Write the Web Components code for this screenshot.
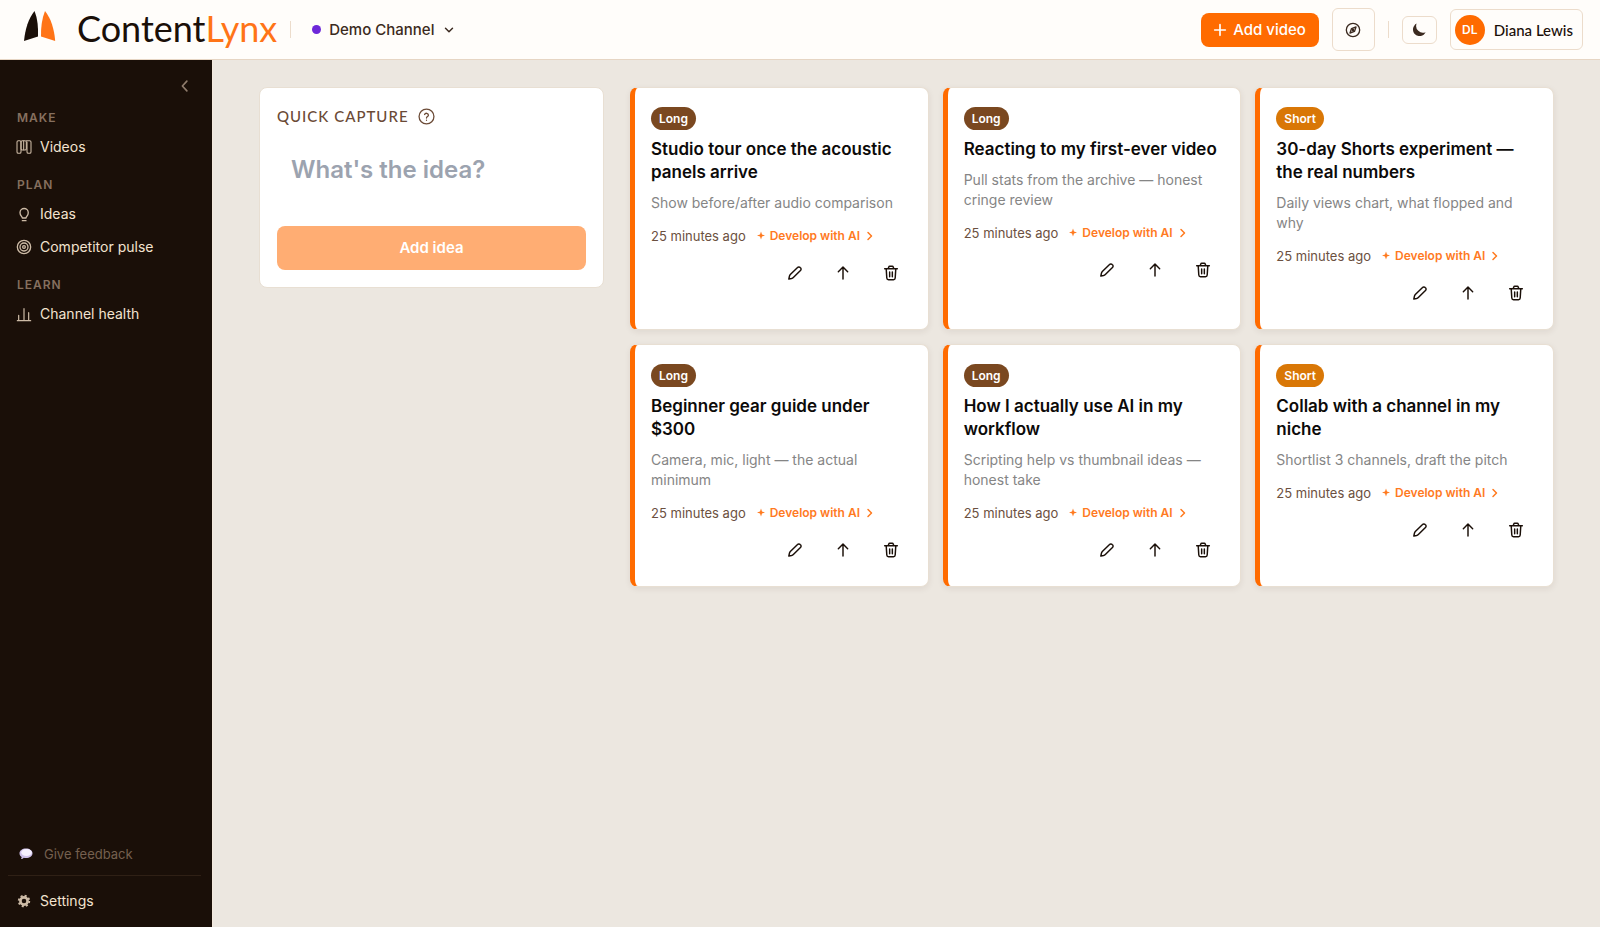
<!DOCTYPE html>
<html lang="en">
<head>
<meta charset="utf-8">
<meta name="viewport" content="width=device-width, initial-scale=1">
<title>ContentLynx</title>
<style>
  html, body {
    height: 100%;
    margin: 0;
  }

  body {
    font: 14px/20px Inter, sans-serif;
    color: #1a0f08;
    background: #ece7e0;
  }
</style>
</head>
<body>
<app-shell>
  <app-header slot="header" channel="Demo Channel" user="Diana Lewis" initials="DL"></app-header>

  <app-sidebar slot="sidebar">
    <nav-group label="Make">
      <nav-item icon="board">Videos</nav-item>
    </nav-group>
    <nav-group label="Plan">
      <nav-item icon="bulb">Ideas</nav-item>
      <nav-item icon="target">Competitor pulse</nav-item>
    </nav-group>
    <nav-group label="Learn">
      <nav-item icon="chart">Channel health</nav-item>
    </nav-group>
    <nav-item slot="footer" icon="speech" muted>Give feedback</nav-item>
    <nav-item slot="footer" icon="gear">Settings</nav-item>
  </app-sidebar>

  <quick-capture></quick-capture>
  <idea-grid>
    <idea-card kind="Long" age="25 minutes ago">
      <span slot="title">Studio tour once the acoustic panels arrive</span>
      <span slot="note">Show before/after audio comparison</span>
    </idea-card>
    <idea-card kind="Long" age="25 minutes ago">
      <span slot="title">Reacting to my first-ever video</span>
      <span slot="note">Pull stats from the archive — honest cringe review</span>
    </idea-card>
    <idea-card kind="Short" age="25 minutes ago">
      <span slot="title">30-day Shorts experiment — the real numbers</span>
      <span slot="note">Daily views chart, what flopped and why</span>
    </idea-card>
    <idea-card kind="Long" age="25 minutes ago">
      <span slot="title">Beginner gear guide under $300</span>
      <span slot="note">Camera, mic, light — the actual minimum</span>
    </idea-card>
    <idea-card kind="Long" age="25 minutes ago">
      <span slot="title">How I actually use AI in my workflow</span>
      <span slot="note">Scripting help vs thumbnail ideas — honest take</span>
    </idea-card>
    <idea-card kind="Short" age="25 minutes ago">
      <span slot="title">Collab with a channel in my niche</span>
      <span slot="note">Shortlist 3 channels, draft the pitch</span>
    </idea-card>
  </idea-grid>
</app-shell>

<script>
const BASE = `
  *, *::after, *::before {
    box-sizing: border-box;
  }

  :host {
    box-sizing: border-box;
  }

  button, input {
    font: inherit;
    color: inherit;
    padding: 0;
    border: none;
    margin: 0;
    background: none;
  }

  button {
    cursor: pointer;
  }

  svg {
    display: block;
    flex: none;
  }
`;

const line = (size, body, width = 2) => `
  <svg width="${size}" height="${size}" viewBox="0 0 24 24" fill="none" stroke="currentColor"
    stroke-width="${width}" stroke-linecap="round" stroke-linejoin="round" aria-hidden="true">${body}</svg>`;

const ICONS = {
  board: line(16, '<rect x="1.500" y="2.500" width="6" height="19" rx="2"/><rect x="7.500" y="2.500" width="8" height="14" rx="2"/><path d="M11.500 3v13"/><path d="M15.500 2.500h5a2 2 0 0 1 2 2v15a2 2 0 0 1-2 2h-2a2 2 0 0 1-2-2v-15"/>', 1.6),
  bulb: line(16, '<path d="M9.500 18c0-2-3.500-3.500-3.500-8a6.200 6.200 0 0 1 12.400 0c0 4.500-3.400 6-3.400 8zM9.500 22h5.500"/>', 2),
  target: line(16, '<circle cx="12" cy="12" r="10"/><circle cx="12" cy="12" r="6"/><circle cx="12" cy="12" r="2"/>', 2),
  chart: line(16, '<path d="M2 22h20M4 21v-7M12 21V4M19 21V10"/>', 1.8),
  speech: `
    <svg width="16" height="16" viewBox="0 0 16 16" aria-hidden="true">
      <path d="M8 2.500c3.700 0 6.500 2.100 6.500 4.800S11.700 12.100 8 12.100c-.8 0-1.500-.1-2.200-.3-.7.700-1.700 1.300-2.800 1.300.5-.6.700-1.300.6-2C2.300 10.200 1.500 8.900 1.500 7.300c0-2.700 2.800-4.800 6.500-4.800z" fill="#cfc0ea"/>
      <ellipse cx="8.500" cy="6.500" rx="5.300" ry="3.500" fill="#f6f0ff"/>
    </svg>`,
  gear: `
    <svg width="16" height="16" viewBox="0 0 16 16" aria-hidden="true">
      <circle cx="8" cy="8" r="3.600" fill="none" stroke="currentColor" stroke-width="2.600"/>
      <circle cx="8" cy="8" r="5.200" fill="none" stroke="currentColor" stroke-width="2" stroke-dasharray="2.040 2.040"/>
    </svg>`,
  chevronLeft: line(18, '<path d="M14.500 18.500l-6-6.500 6-6.500"/>', 2.2),
  chevronDown: line(14, '<path d="M6 9l6 6 6-6"/>', 2.5),
  chevronRight: line(12, '<path d="M8 19l7-7-7-7"/>', 3),
  plus: line(16, '<path d="M12 4v16M4 12h16"/>', 2.500),
  compass: line(16, '<circle cx="12" cy="12" r="10"/><path d="M16.500 7.500l-2.300 6.700-6.700 2.300 2.300-6.700z"/><circle cx="12" cy="12" r="1"/>', 2),
  moon: `
    <svg width="16" height="16" viewBox="0 0 16 16" aria-hidden="true">
      <path d="M5.600 1.600a6.600 6.600 0 1 0 9 8.600A6.800 6.800 0 0 1 5.600 1.600z" fill="currentColor"/>
    </svg>`,
  help: `
    <svg width="17" height="17" viewBox="0 0 24 24" fill="none" stroke="currentColor"
      stroke-width="1.800" stroke-linecap="round" stroke-linejoin="round" aria-hidden="true">
      <circle cx="12" cy="12" r="10.500"/><path d="M9.300 9.200a2.800 2.800 0 0 1 5.400.9c0 1.800-2.700 2.300-2.700 4M12 17.300v.1"/>
    </svg>`,
  spark: `
    <svg width="10" height="10" viewBox="0 0 10 10" aria-hidden="true">
      <path d="M5 .5l1 2.900 3 1.100-3 1.100L5 8.500 4 5.600 1 4.500l3-1.100z" fill="currentColor"/>
    </svg>`,
  pencil: line(16, '<path d="M15.800 3.800a2.700 2.700 0 0 1 4 0l.4.4a2.700 2.700 0 0 1 0 4L9.500 18.900c-.8.800-1.700 1.200-2.700 1.400L2.800 21l.8-4c.2-1 .7-1.900 1.400-2.600z"/>', 2.2),
  arrowUp: line(16, '<path d="M12 21V3M5 10l7-7 7 7"/>', 2.2),
  trash: line(16, '<path d="M2.500 5.500h19M4.800 5.500l.9 14c.1 1.400 1 2.500 2.500 2.500h7.600c1.500 0 2.400-1.100 2.500-2.500l.9-14M8 5l.7-2c.2-.6.700-1 1.300-1h4c.6 0 1.100.4 1.300 1L16 5M10 10.500v7M14 10.500v7"/>', 2.2),
};

class BaseElement extends HTMLElement {
  constructor() {
    super();
    this.attachShadow({ mode: 'open' });
  }

  connectedCallback() {
    this.shadowRoot.innerHTML = `<style>${BASE}${this.styles()}</style>${this.markup()}`;
  }
}

class AppShell extends BaseElement {
  styles() {
    return `
      :host {
        min-height: 100%;
        display: grid;
        grid-template-columns: 213px minmax(0, 1fr);
        grid-template-rows: 60px 1fr;
      }

      ::slotted([slot="header"]) {
        grid-column: 1 / -1;
      }

      main {
        padding: 27px 46px;
        display: grid;
        grid-template-columns: 345px minmax(0, 1fr);
        gap: 26px;
        align-items: start;
      }
    `;
  }

  markup() {
    return `
      <slot name="header"></slot>
      <slot name="sidebar"></slot>
      <main><slot></slot></main>
    `;
  }
}

class AppHeader extends BaseElement {
  styles() {
    return `
      :host {
        --line: #ecdccb;
        padding: 0 17px 0 24px;
        border-bottom: solid 1px #e6d5c3;
        background: #fffdfa;
        display: flex;
        justify-content: space-between;
        align-items: center;
      }

      .side {
        display: flex;
        align-items: center;
        gap: 13px;
      }

      .logo {
        color: #1a0f08;
        text-decoration: none;
        display: flex;
        align-items: center;
        gap: 21px;
      }

      .wordmark {
        font: 36px/40px Lato, sans-serif;
        padding-bottom: 4px;
      }

      .wordmark em {
        color: #ff7417;
        font-style: normal;
      }

      .rule {
        width: 1px;
        height: 17px;
        background: var(--line);
      }

      .channel {
        color: #3b2a20;
        font-size: 15px;
        font-weight: 500;
        padding: 0 8px;
        display: flex;
        align-items: center;
        gap: 8px;
      }

      .channel__dot {
        width: 9px;
        height: 9px;
        border-radius: 50%;
        background: #6d28d9;
      }

      .add {
        height: 34px;
        color: #fff;
        font-size: 15px;
        font-weight: 500;
        padding: 0 13px 0 11px;
        border-radius: 8px;
        background: #ff6b00;
        display: flex;
        align-items: center;
        gap: 5px;
      }

      .boxed {
        color: #3b2a20;
        border: solid 1px var(--line);
        border-radius: 6px;
        display: flex;
        align-items: center;
        justify-content: center;
      }

      .boxed--tour {
        width: 43px;
        height: 43px;
      }

      .boxed--theme {
        width: 35px;
        height: 28px;
      }

      .user {
        height: 41px;
        color: #1a0f08;
        font: 500 15px/20px Lato, sans-serif;
        padding: 0 9px 0 4px;
        gap: 9px;
      }

      .avatar {
        width: 30px;
        height: 30px;
        color: #fff;
        font: 600 12px/30px Inter, sans-serif;
        border-radius: 50%;
        background: #ff6b00;
      }
    `;
  }

  markup() {
    return `
      <div class="side">
        <a class="logo" href="#">
          <svg width="32" height="40" viewBox="0 0 32 40" aria-hidden="true">
            <path d="M10.500 1C4.500 8.500 1.200 19 0 31l14-4.500C14.300 17 13.600 8.500 10.500 1z" fill="#1a0f08"/>
            <path d="M21 1c6 7.500 9.200 18 10.200 30L17 26.500C16.800 17 18 8.500 21 1z" fill="#ff7417"/>
          </svg>
          <span class="wordmark">Content<em>Lynx</em></span>
        </a>
        <span class="rule"></span>
        <button type="button" class="channel">
          <span class="channel__dot"></span>${this.getAttribute('channel')}${ICONS.chevronDown}
        </button>
      </div>
      <div class="side">
        <button type="button" class="add">${ICONS.plus}Add video</button>
        <button type="button" class="boxed boxed--tour" aria-label="Tour">${ICONS.compass}</button>
        <span class="rule"></span>
        <button type="button" class="boxed boxed--theme" aria-label="Dark mode">${ICONS.moon}</button>
        <button type="button" class="boxed user">
          <span class="avatar">${this.getAttribute('initials')}</span>${this.getAttribute('user')}
        </button>
      </div>
    `;
  }
}

class AppSidebar extends BaseElement {
  styles() {
    return `
      :host {
        color: #f3e3cf;
        border-right: solid 1px #f3e9dd;
        padding: 12px 9px 10px 8px;
        background: #1a0f08;
        display: flex;
        flex-direction: column;
      }

      .collapse {
        width: 36px;
        height: 24px;
        color: #8f7c6c;
        align-self: flex-end;
        margin-top: 2px;
        margin-bottom: -2px;
        display: flex;
        align-items: center;
        justify-content: center;
      }

      nav {
        flex: 1;
      }

      footer {
        margin-right: 2px;
      }
    `;
  }

  markup() {
    return `
      <button type="button" class="collapse" aria-label="Collapse">${ICONS.chevronLeft}</button>
      <nav><slot></slot></nav>
      <footer><slot name="footer"></slot></footer>
    `;
  }
}

class NavGroup extends BaseElement {
  styles() {
    return `
      :host {
        display: block;
      }

      h2 {
        color: #86705f;
        font-size: 12px;
        line-height: 18px;
        font-weight: 600;
        letter-spacing: 1px;
        text-transform: uppercase;
        padding: 13px 9px 3px;
        margin: 0;
      }
    `;
  }

  markup() {
    return `
      <h2>${this.getAttribute('label')}</h2>
      <slot></slot>
    `;
  }
}

class NavItem extends BaseElement {
  styles() {
    return `
      :host {
        display: block;
      }

      :host([muted]) {
        color: #75604f;
        font-size: 13px;
        padding-bottom: 5px;
        border-bottom: solid 1px #2f2015;
        margin-bottom: 8px;
      }

      a {
        height: 33px;
        color: inherit;
        text-decoration: none;
        padding: 0 8px;
        display: flex;
        align-items: center;
        gap: 8px;
      }

      :host([muted]) a {
        padding: 0 10px;
        gap: 10px;
      }

      svg {
        color: #cdbba6;
      }
    `;
  }

  markup() {
    return `<a href="#">${ICONS[this.getAttribute('icon')]}<slot></slot></a>`;
  }
}

class QuickCapture extends BaseElement {
  styles() {
    return `
      :host {
        border: solid 1px #e8dfd3;
        border-radius: 8px;
        padding: 17px;
        background: #fff;
        display: block;
      }

      header {
        color: #6b4a36;
        display: flex;
        align-items: center;
        gap: 9px;
      }

      h2 {
        font: 500 15px/22px Lato, sans-serif;
        letter-spacing: 1px;
        text-transform: uppercase;
        margin: 0;
      }

      input {
        width: 100%;
        height: 58px;
        color: #1a0f08;
        font-size: 24px;
        font-weight: 600;
        padding: 0 14px;
        outline: none;
        margin: 13px 0 28px;
        display: block;
      }

      input::placeholder {
        color: #9ca3af;
        opacity: 1;
      }

      .submit {
        width: 100%;
        height: 44px;
        color: #fff;
        font-size: 15px;
        font-weight: 600;
        border-radius: 8px;
        background: #ffad73;
      }
    `;
  }

  markup() {
    return `
      <header>
        <h2>Quick capture</h2>
        <button type="button" aria-label="Help">${ICONS.help}</button>
      </header>
      <input type="text" aria-label="Idea" placeholder="What's the idea?">
      <button type="button" class="submit">Add idea</button>
    `;
  }
}

class IdeaGrid extends BaseElement {
  styles() {
    return `
      :host {
        display: grid;
        grid-template-columns: repeat(3, minmax(0, 1fr));
        grid-auto-rows: 1fr;
        gap: 14px;
      }
    `;
  }

  markup() {
    return '<slot></slot>';
  }
}

class IdeaCard extends BaseElement {
  styles() {
    return `
      :host {
        border: solid 1px #e8dfd3;
        border-left: solid 5px #ff6b00;
        border-radius: 8px;
        padding: 19px 15px 14px 16px;
        background: #fff;
        box-shadow: 0 2px 6px rgba(60, 40, 20, 0.08);
        display: block;
      }

      .badge {
        width: max-content;
        color: #fff;
        font-size: 12px;
        line-height: 23px;
        font-weight: 600;
        padding: 0 8px;
        border-radius: 12px;
        background: #7a4820;
      }

      .badge--short {
        background: #d97706;
      }

      h3 {
        color: #0c0a09;
        font-size: 17px;
        line-height: 23px;
        font-weight: 600;
        margin: 8px 0 9px;
      }

      p {
        color: #858585;
        font-size: 14px;
        line-height: 20px;
        margin: 0;
      }

      .meta {
        font-size: 13px;
        line-height: 20px;
        margin: 13px 0 5px;
        display: flex;
        align-items: center;
        gap: 10px;
      }

      time {
        color: #6b5040;
      }

      .develop {
        color: #ff7a1f;
        font-size: 12px;
        font-weight: 600;
        display: flex;
        align-items: center;
        gap: 4px;
      }

      .actions {
        display: flex;
        justify-content: flex-end;
        gap: 4px;
      }

      .actions button {
        width: 44px;
        height: 44px;
        display: flex;
        align-items: center;
        justify-content: center;
      }
    `;
  }

  markup() {
    const kind = this.getAttribute('kind');
    return `
      <div class="badge badge--${kind.toLowerCase()}">${kind}</div>
      <h3><slot name="title"></slot></h3>
      <p><slot name="note"></slot></p>
      <div class="meta">
        <time>${this.getAttribute('age')}</time>
        <button type="button" class="develop">${ICONS.spark}Develop with AI${ICONS.chevronRight}</button>
      </div>
      <div class="actions">
        <button type="button" aria-label="Edit">${ICONS.pencil}</button>
        <button type="button" aria-label="Promote">${ICONS.arrowUp}</button>
        <button type="button" aria-label="Delete">${ICONS.trash}</button>
      </div>
    `;
  }
}

customElements.define('app-shell', AppShell);
customElements.define('app-header', AppHeader);
customElements.define('app-sidebar', AppSidebar);
customElements.define('nav-group', NavGroup);
customElements.define('nav-item', NavItem);
customElements.define('quick-capture', QuickCapture);
customElements.define('idea-grid', IdeaGrid);
customElements.define('idea-card', IdeaCard);
</script>
</body>
</html>
